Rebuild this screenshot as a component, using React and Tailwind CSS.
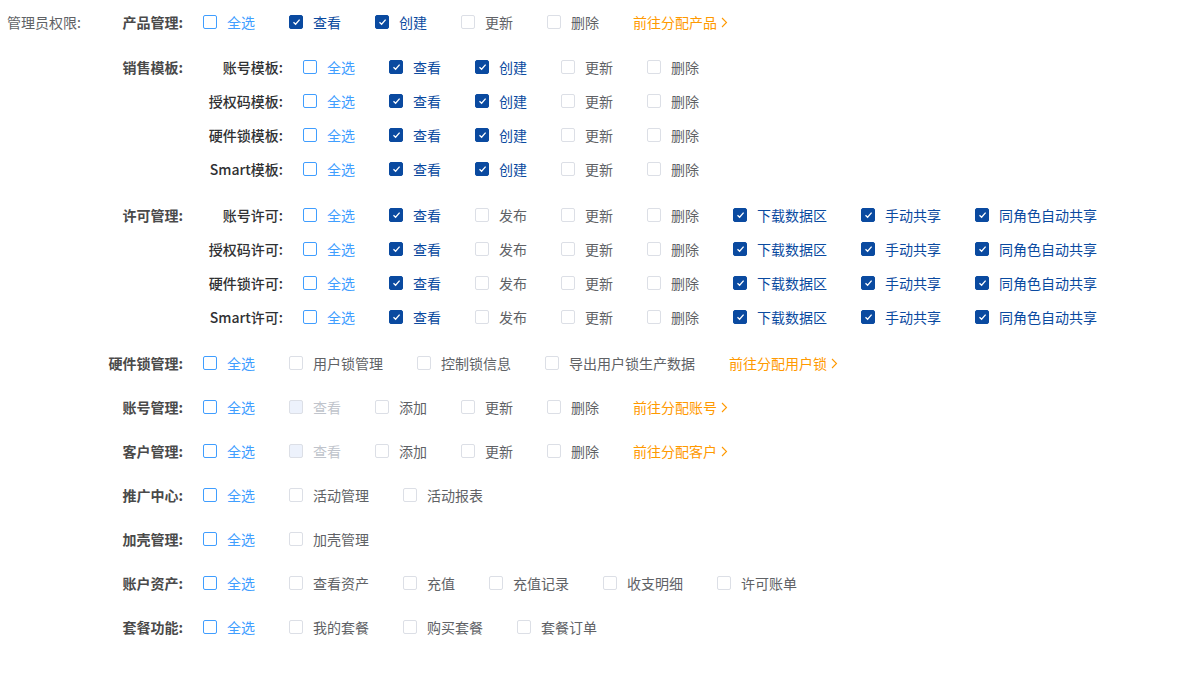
import React from "react";

const V = "v"; // checked
const N = "n"; // unchecked
const D = "d"; // disabled

const sections = [
  { label: "产品管理", mb: "mb-[11px]", items: [["全选", "all"], ["查看", V], ["创建", V], ["更新", N], ["删除", N]], link: "前往分配产品" },
  {
    label: "销售模板", mb: "mb-[12px]",
    rows: ["账号模板", "授权码模板", "硬件锁模板", "Smart模板"].map((l) => ({
      label: l, items: [["全选", "all"], ["查看", V], ["创建", V], ["更新", N], ["删除", N]],
    })),
  },
  {
    label: "许可管理", mb: "mb-[12px]",
    rows: ["账号许可", "授权码许可", "硬件锁许可", "Smart许可"].map((l) => ({
      label: l,
      items: [["全选", "all"], ["查看", V], ["发布", N], ["更新", N], ["删除", N], ["下载数据区", V], ["手动共享", V], ["同角色自动共享", V]],
    })),
  },
  { label: "硬件锁管理", items: [["全选", "all"], ["用户锁管理", N], ["控制锁信息", N], ["导出用户锁生产数据", N]], link: "前往分配用户锁" },
  { label: "账号管理", items: [["全选", "all"], ["查看", D], ["添加", N], ["更新", N], ["删除", N]], link: "前往分配账号" },
  { label: "客户管理", items: [["全选", "all"], ["查看", D], ["添加", N], ["更新", N], ["删除", N]], link: "前往分配客户" },
  { label: "推广中心", items: [["全选", "all"], ["活动管理", N], ["活动报表", N]] },
  { label: "加壳管理", items: [["全选", "all"], ["加壳管理", N]] },
  { label: "账户资产", items: [["全选", "all"], ["查看资产", N], ["充值", N], ["充值记录", N], ["收支明细", N], ["许可账单", N]] },
  { label: "套餐功能", items: [["全选", "all"], ["我的套餐", N], ["购买套餐", N], ["套餐订单", N]] },
];

function Box({ state }) {
  if (state === V)
    return (
      <span className="w-[14px] h-[14px] rounded-[2px] bg-[#0a4aa0] border border-[#0a4aa0] flex items-center justify-center">
        <svg width="9" height="8" viewBox="0 0 9 8"><path d="M1.5 4.2 L3.6 6.2 L7.6 1.6" fill="none" stroke="white" strokeWidth="1.3" /></svg>
      </span>
    );
  if (state === D) return <span className="w-[14px] h-[14px] rounded-[2px] bg-[#edf2fc] border border-[#dcdfe6]" />;
  if (state === "all") return <span className="w-[14px] h-[14px] rounded-[2px] bg-white border border-[#409eff]" />;
  return <span className="w-[14px] h-[14px] rounded-[2px] bg-white border border-[#dcdfe6]" />;
}

function Item({ text, state }) {
  const color = state === V ? "text-[#0a4aa0]" : state === D ? "text-[#c0c4cc]" : state === "all" ? "text-[#409eff]" : "text-[#606266]";
  return (
    <label className="flex items-center mr-[34px] shrink-0">
      <Box state={state} />
      <span className={"pl-[10px] whitespace-nowrap " + color}>{text}</span>
    </label>
  );
}

function Items({ items, link }) {
  return (
    <div className="flex items-center h-[34px]">
      {items.map(([t, s]) => <Item key={t} text={t} state={s} />)}
      {link && (
        <span className="text-[#ff9900] flex items-center gap-[4px] whitespace-nowrap">
          {link}
          <svg width="7" height="11" viewBox="0 0 7 11"><path d="M1 1 L5.5 5.5 L1 10" fill="none" stroke="#ff9900" strokeWidth="1.1" /></svg>
        </span>
      )}
    </div>
  );
}

export default function App() {
  return (
    <div className="w-[1199px] h-[683px] bg-white text-[14px] pt-[5px] pl-[7px] flex" style={{ fontFamily: '"Noto Sans CJK SC", "Noto Sans", sans-serif' }}>
      <div className="w-[100px] h-[34px] flex items-center text-[#606266] shrink-0">管理员权限:</div>
      <div className="flex flex-col">
        {sections.map((s) => (
          <div key={s.label} className={"flex " + (s.mb || "mb-[10px]")}>
            <div className="w-[76px] h-[34px] flex items-center justify-end font-bold text-[#4a4a4a] shrink-0 whitespace-nowrap">{s.label}:</div>
            <div className="pl-[20px] flex flex-col">
              {s.rows ? (
                s.rows.map((r) => (
                  <div key={r.label} className="flex">
                    <div className="w-[80px] h-[34px] flex items-center justify-end text-[#303133] font-medium shrink-0 whitespace-nowrap">{r.label}:</div>
                    <div className="pl-[20px]"><Items items={r.items} /></div>
                  </div>
                ))
              ) : (
                <Items items={s.items} link={s.link} />
              )}
            </div>
          </div>
        ))}
      </div>
    </div>
  );
}
